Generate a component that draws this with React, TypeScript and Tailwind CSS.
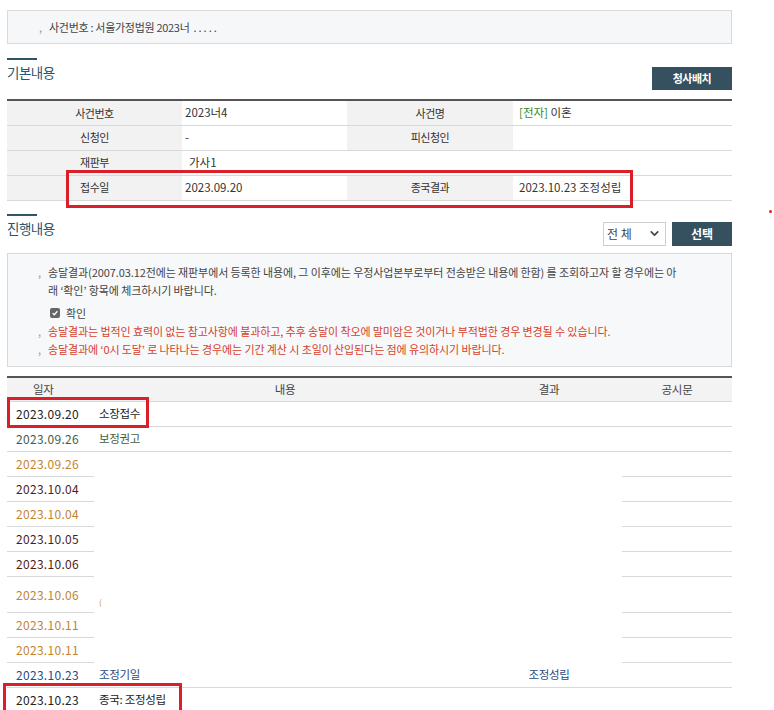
import { ChevronDown } from 'lucide-react'

const FONT = "font-['Noto_Sans_CJK_KR','Noto_Sans',sans-serif]"

type Row = {
  date: string
  color: string
  content?: string
  result?: string
  hidden?: boolean
  tall?: boolean
}

// progress rows (middle rows are masked in the source image)
const rows: Row[] = [
  { date: '2023.09.20', color: 'text-[#222222]', content: '소장접수' },
  { date: '2023.09.26', color: 'text-[#3f5e47]', content: '보정권고' },
  { date: '2023.09.26', color: 'text-[#c3842e]', hidden: true },
  { date: '2023.10.04', color: 'text-[#4e1b1b]', hidden: true },
  { date: '2023.10.04', color: 'text-[#c3842e]', hidden: true },
  { date: '2023.10.05', color: 'text-[#4e1b1b]', hidden: true },
  { date: '2023.10.06', color: 'text-[#4e1b1b]', hidden: true },
  { date: '2023.10.06', color: 'text-[#c3842e]', hidden: true, tall: true, content: '(' },
  { date: '2023.10.11', color: 'text-[#c3842e]', hidden: true },
  { date: '2023.10.11', color: 'text-[#c3842e]', hidden: true },
  { date: '2023.10.23', color: 'text-[#2b4a82]', content: '조정기일', result: '조정성립' },
  { date: '2023.10.23', color: 'text-[#222222]', content: '종국: 조정성립' },
]

function Bullet() {
  return <span className="inline-block w-[10px] text-[#999]">,</span>
}

function SectionTitle({ title }: { title: string }) {
  return (
    <div>
      <div className="w-[30px] h-[2px] bg-[#2f5568]" />
      <h2 className="mt-[3px] text-[13.5px] leading-[18px] text-[#24566f] tracking-[-0.5px]">{title}</h2>
    </div>
  )
}

export default function App() {
  return (
    <div className={`relative min-h-[710px] bg-white ${FONT} text-[11px] text-[#333]`}>
      {/* stray red dot */}
      <div className="absolute left-[769px] top-[210px] w-[3px] h-[3px] rounded-full bg-[#e0201f]" />

      <div className="ml-[7px] w-[725px] pt-[10px]">
        {/* case number box */}
        <div className="h-[34px] border border-[#dadada] bg-[#f6f7f9] flex items-center pl-[31px] tracking-[-0.3px] text-[#444]">
          <Bullet />
          <span>사건번호 : 서울가정법원 2023너</span>
          <span className="ml-[4px] tracking-[2px]">.....</span>
        </div>

        {/* 기본내용 */}
        <div className="mt-[14px] flex items-start justify-between">
          <SectionTitle title="기본내용" />
          <button className="mt-[9px] w-[80px] h-[23px] bg-[#35505f] text-white font-bold text-[11px] tracking-[-0.5px]">청사배치</button>
        </div>

        <div className="relative mt-[9px]">
          <table className="w-full border-collapse border-t-2 border-[#555] tracking-[-0.5px]">
            <colgroup>
              <col className="w-[175px]" />
              <col className="w-[165px]" />
              <col className="w-[166px]" />
              <col />
            </colgroup>
            <tbody className="[&_td]:text-[11.5px] [&_td]:tracking-[0px]">
              <tr className="h-[25px] border-b border-[#d9d9d9]">
                <th className="bg-[#f2f2f2] font-normal text-center">사건번호</th>
                <td className="pl-[3px]">2023너4</td>
                <th className="bg-[#f2f2f2] font-normal text-center">사건명</th>
                <td className="pl-[6px]"><span className="text-[#2f8a2f]">[전자]</span> 이혼</td>
              </tr>
              <tr className="h-[25px] border-b border-[#d9d9d9]">
                <th className="bg-[#f2f2f2] font-normal text-center">신청인</th>
                <td className="pl-[3px]">-</td>
                <th className="bg-[#f2f2f2] font-normal text-center">피신청인</th>
                <td />
              </tr>
              <tr className="h-[25px] border-b border-[#d9d9d9]">
                <th className="bg-[#f2f2f2] font-normal text-center">재판부</th>
                <td className="pl-[7px]" colSpan={3}>가사1</td>
              </tr>
              <tr className="h-[25px] border-b border-[#d9d9d9]">
                <th className="bg-[#f2f2f2] font-normal text-center">접수일</th>
                <td className="pl-[3px]">2023.09.20</td>
                <th className="bg-[#f2f2f2] font-normal text-center">종국결과</th>
                <td className="pl-[6px]">2023.10.23 조정성립</td>
              </tr>
            </tbody>
          </table>
          {/* highlight */}
          <div className="absolute left-[59px] top-[71px] w-[567px] h-[38px] border-[3px] border-[#d81f2a]" />
        </div>

        {/* 진행내용 */}
        <div className="mt-[13px] flex items-start justify-between">
          <SectionTitle title="진행내용" />
          <div className="mt-[8px] flex gap-[6px]">
            <div className="w-[63px] h-[24px] border border-[#cfcfcf] bg-white flex items-center justify-between pl-[3px] pr-[4px] text-[12px] text-[#444]">
              <span>전 체</span>
              <ChevronDown size={13} strokeWidth={3} className="text-[#444]" />
            </div>
            <button className="w-[60px] h-[24px] bg-[#35505f] text-white font-bold text-[12px]">선택</button>
          </div>
        </div>

        {/* notice box */}
        <div className="mt-[7px] border border-[#d9d9d9] bg-[#f7f8fa] pl-[30px] pt-[9px] pb-[8px] leading-[18px] tracking-[-0.1px] text-[#444] whitespace-nowrap">
          <div className="flex">
            <Bullet />
            <span>
              송달결과(2007.03.12전에는 재판부에서 등록한 내용에, 그 이후에는 우정사업본부로부터 전송받은 내용에 한함) 를 조회하고자 할 경우에는 아
              <br />
              래 ‘확인’ 항목에 체크하시기 바랍니다.
            </span>
          </div>
          <label className="mt-[5px] ml-[12px] flex items-center gap-[6px]">
            <span className="w-[10px] h-[10px] rounded-[2px] bg-[#666] flex items-center justify-center">
              <svg viewBox="0 0 10 10" className="w-[8px] h-[8px]">
                <path d="M2 5.2 L4.1 7.2 L8 2.8" fill="none" stroke="white" strokeWidth="1.6" />
              </svg>
            </span>
            <span>확인</span>
          </label>
          <div className="flex text-[#d6412b]">
            <Bullet />
            <span>송달결과는 법적인 효력이 없는 참고사항에 불과하고, 추후 송달이 착오에 말미암은 것이거나 부적법한 경우 변경될 수 있습니다.</span>
          </div>
          <div className="flex text-[#d6412b]">
            <Bullet />
            <span>송달결과에 ‘0시 도달’ 로 나타나는 경우에는 기간 계산 시 초일이 산입된다는 점에 유의하시기 바랍니다.</span>
          </div>
        </div>

        {/* progress table */}
        <div className="relative mt-[9px]">
          <table className="w-full border-collapse border-t-2 border-[#555] tracking-[-0.3px]">
            <colgroup>
              <col className="w-[87px]" />
              <col className="w-[382px]" />
              <col className="w-[146px]" />
              <col />
            </colgroup>
            <thead>
              <tr className="h-[25px] bg-[#f3f3f3] border-b border-[#d9d9d9] text-[#444] text-[11.5px]">
                <th className="font-normal text-left pl-[26px]">일자</th>
                <th className="font-normal text-center">내용</th>
                <th className="font-normal text-center">결과</th>
                <th className="font-normal text-center">공시문</th>
              </tr>
            </thead>
            <tbody className="text-[11.5px]">
              {rows.map((r, i) => {
                const line = r.hidden ? '' : 'border-b border-[#d9d9d9]'
                return (
                  <tr key={i} className={r.tall ? 'h-[36px]' : 'h-[25px]'}>
                    <td className={`pl-[9px] border-b border-[#d9d9d9] text-[12px] tracking-[0.3px] ${r.color}`}>{r.date}</td>
                    <td className={`pl-[5px] ${line} ${r.color}`}>
                      {r.tall ? <span className="relative top-[6px] text-[8px]">{r.content}</span> : r.content}
                    </td>
                    <td className={`text-center ${line} ${r.color}`}>{r.result}</td>
                    <td className="border-b border-[#d9d9d9]" />
                  </tr>
                )
              })}
            </tbody>
          </table>
          {/* highlights */}
          <div className="absolute left-0 top-[21px] w-[142px] h-[31px] border-[3px] border-[#d81f2a]" />
          <div className="absolute left-[-4px] top-[307px] w-[179px] h-[40px] border-[3px] border-[#d81f2a]" />
        </div>
      </div>
    </div>
  )
}
